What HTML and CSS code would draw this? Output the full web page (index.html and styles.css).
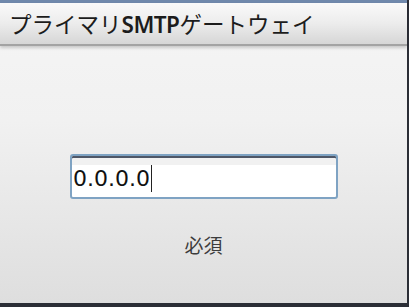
FILE: index.html
```html
<!DOCTYPE html>
<html lang="ja">
<head>
  <meta charset="UTF-8" />
  <meta name="viewport" content="width=device-width, initial-scale=1" />
  <title>プライマリSMTPゲートウェイ</title>
  <link rel="stylesheet" href="styles.css">
</head>
<body>
  <div class="screen">
    <div class="topbar"></div>
    <div class="header">
      <h1>プライマリ<b>SMTP</b>ゲートウェイ</h1>
    </div>
    <div class="content">
      <div class="field"><span class="value">0.0.0.0</span><span class="caret"></span></div>
      <p class="hint">必須</p>
    </div>
  </div>
</body>
</html>
```

FILE: styles.css
```css
html, body {
  margin: 0;
  padding: 0;
}
body {
  width: 409px;
  height: 307px;
  overflow: hidden;
  background: #2b2e36;
  font-family: "Noto Sans", "Noto Sans CJK JP", sans-serif;
}
.screen {
  width: 407px;
  height: 303px;
  display: flex;
  flex-direction: column;
  background: linear-gradient(#f5f5f5, #f1f1f1 40%, #dedede);
}
.topbar {
  height: 3px;
  background: #7089ac;
}
.header {
  height: 41px;
  display: flex;
  align-items: center;
  padding-left: 9px;
  background: linear-gradient(#fafafa, #ececec 50%, #d6d6d6);
  border-bottom: 2px solid #a3a3a3;
  box-shadow: 0 2px 3px rgba(0,0,0,0.18);
}
h1 {
  margin: 0;
  font-size: 22.5px;
  font-weight: 400;
  color: #1c1c1c;
}
h1 b {
  font-weight: 600;
  letter-spacing: -0.5px;
}
.content {
  flex: 1;
  display: flex;
  flex-direction: column;
  align-items: center;
  padding-top: 108px;
}
.field {
  width: 263px;
  height: 41px;
  margin-left: 1px;
  display: flex;
  align-items: center;
  padding-left: 1px;
  border: 2px solid #7fa3c3;
  border-radius: 3px;
  background: linear-gradient(#f1f1f1, #f1f1f1 9px, #fff 9px);
  box-shadow: inset 0 2px 0 #4f5767;
}
.value {
  font-family: "DejaVu Sans", sans-serif;
  font-size: 22px;
  color: #111;
  padding-top: 4px;
}
.caret {
  width: 1px;
  height: 27px;
  margin-top: 4px;
  margin-left: 1px;
  background: #222;
}
.hint {
  margin: 32px 0 0;
  font-family: "Noto Sans CJK JP", sans-serif;
  font-size: 19px;
  color: #3c3c3c;
}
```
